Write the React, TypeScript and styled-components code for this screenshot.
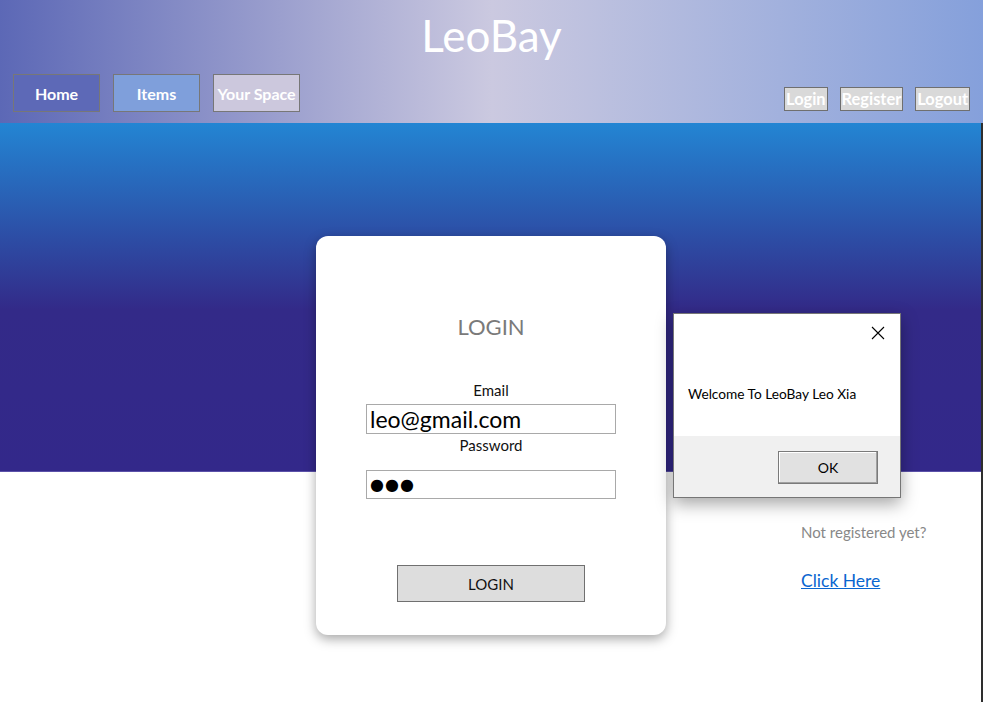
import React from "react";
import styled, { createGlobalStyle } from "styled-components";

const GlobalStyle = createGlobalStyle`
  html, body { margin: 0; padding: 0; background: #ffffff; }
  body { font-family: "Lato", "Noto Sans", "DejaVu Sans", sans-serif; }
  * { box-sizing: border-box; }
`;

const Page = styled.div`
  position: relative;
  width: 983px;
  height: 702px;
  overflow: hidden;
  display: flex;
  flex-direction: column;
`;

const Header = styled.header`
  height: 123px;
  flex: none;
  display: flex;
  flex-direction: column;
  background: linear-gradient(90deg, #5c68b6 0%, #cbc9e0 50%, #85a0db 100%);
`;

const Title = styled.h1`
  margin: 0;
  padding-top: 9px;
  text-align: center;
  font-family: "Lato", "Noto Sans", sans-serif;
  font-weight: 400;
  font-size: 44px;
  line-height: normal;
  color: #ffffff;
`;

const NavRow = styled.nav`
  margin-top: auto;
  display: flex;
  justify-content: space-between;
  align-items: flex-end;
  padding: 0 13px 11px 13px;
`;

const NavGroup = styled.div`
  display: flex;
  gap: 13px;
`;

const NavButton = styled.button<{ $bg: string }>`
  width: 87px;
  height: 38px;
  padding: 0;
  border: 1px solid #777777;
  background: ${(p) => p.$bg};
  color: #ffffff;
  font-family: "Lato", "Noto Sans", sans-serif;
  font-weight: 700;
  font-size: 16px;
  white-space: nowrap;
  overflow: visible;
  cursor: pointer;
`;

const AuthGroup = styled.div`
  display: flex;
  gap: 12px;
  margin-bottom: 1px;
`;

const AuthButton = styled.button`
  height: 24px;
  padding: 0 1px;
  border: 1px solid #6f6f6f;
  background: #d9d9d9;
  color: #ffffff;
  font-family: "Lato", "Noto Sans", sans-serif;
  font-weight: 700;
  font-size: 16.4px;
  line-height: 1;
  cursor: pointer;
`;

const Main = styled.main`
  flex: 1;
  display: grid;
  grid-template-columns: 316px 350px 1fr;
  align-items: start;
  padding-top: 113px;
  border-right: 2px solid #2e2e2e;
  background: linear-gradient(
    180deg,
    #2385d3 0px,
    #332a88 187px,
    #33288a 348px,
    #5b51a9 348px,
    #5b51a9 349px,
    #ffffff 349px
  );
`;

const Card = styled.section`
  grid-column: 2;
  height: 399px;
  background: #ffffff;
  border-radius: 12px;
  box-shadow: 0 4px 12px rgba(0, 0, 0, 0.35);
  display: flex;
  flex-direction: column;
  align-items: center;
  padding-top: 76px;
`;

const CardTitle = styled.h2`
  margin: 0;
  height: 30px;
  line-height: 30px;
  font-weight: 400;
  font-size: 22px;
  color: #7a7a7a;
`;

const FieldLabel = styled.label<{ $top: number }>`
  display: block;
  margin-top: ${(p) => p.$top}px;
  height: 20px;
  line-height: 20px;
  font-size: 15px;
  color: #111111;
`;

const TextField = styled.input<{ $top: number; $h: number }>`
  display: block;
  margin-top: ${(p) => p.$top}px;
  width: 250px;
  height: ${(p) => p.$h}px;
  padding: 0 3px;
  border: 1px solid #a9a9a9;
  background: #ffffff;
  font-family: "Lato", "Noto Sans", sans-serif;
  font-size: 23px;
  color: #000000;
  outline: none;
`;

const DotsField = styled(TextField)`
  font-family: "DejaVu Sans", sans-serif;
  font-size: 16px;
  letter-spacing: 1px;
`;

const SubmitButton = styled.button`
  margin-top: 66px;
  width: 188px;
  height: 37px;
  border: 1px solid #707070;
  background: #dddddd;
  color: #111111;
  font-family: "Lato", "Noto Sans", sans-serif;
  font-size: 15px;
  cursor: pointer;
`;

const Aside = styled.aside`
  grid-column: 3;
  padding: 286px 0 0 135px;
  display: flex;
  flex-direction: column;
  align-items: flex-start;
`;

const Hint = styled.p`
  margin: 0;
  height: 20px;
  line-height: 20px;
  font-size: 15px;
  color: #888888;
`;

const RegisterLink = styled.a`
  margin-top: 27px;
  line-height: 24px;
  font-size: 17.5px;
  color: #0a66d0;
  text-decoration: underline;
  cursor: pointer;
`;

const Dialog = styled.div`
  position: absolute;
  left: 673px;
  top: 313px;
  width: 228px;
  height: 185px;
  border: 1px solid #767676;
  background: #ffffff;
  box-shadow: 0 6px 16px rgba(0, 0, 0, 0.35);
  display: flex;
  flex-direction: column;
`;

const DialogBody = styled.div`
  flex: 1;
  padding: 12px 15px 0 14px;
  display: flex;
  flex-direction: column;
`;

const CloseButton = styled.button`
  align-self: flex-end;
  width: 14px;
  height: 14px;
  padding: 0;
  border: 0;
  background: transparent;
  display: flex;
  cursor: pointer;
`;

const Message = styled.p`
  margin: 46px 0 0;
  font-family: "Lato", sans-serif;
  font-size: 13.7px;
  line-height: 16px;
  color: #000000;
  white-space: nowrap;
`;

const DialogFooter = styled.div`
  height: 61px;
  flex: none;
  background: #f0f0f0;
  display: flex;
  justify-content: flex-end;
  align-items: flex-start;
  padding: 15px 22px 0 0;
`;

const OkButton = styled.button`
  width: 100px;
  height: 33px;
  border: 1px solid #7a7a7a;
  background: #e1e1e1;
  box-shadow: inset -1px -1px 0 #a0a0a0, inset 1px 1px 0 #ffffff;
  font-family: "Lato", sans-serif;
  font-size: 14px;
  color: #000000;
  cursor: pointer;
`;

export default function App() {
  return (
    <>
      <GlobalStyle />
      <Page>
        <Header>
          <Title>LeoBay</Title>
          <NavRow>
            <NavGroup>
              <NavButton $bg="#5d69b7">Home</NavButton>
              <NavButton $bg="#7f9fdb">Items</NavButton>
              <NavButton $bg="#ccc8dd">Your Space</NavButton>
            </NavGroup>
            <AuthGroup>
              <AuthButton>Login</AuthButton>
              <AuthButton>Register</AuthButton>
              <AuthButton>Logout</AuthButton>
            </AuthGroup>
          </NavRow>
        </Header>
        <Main>
          <Card>
            <CardTitle>LOGIN</CardTitle>
            <FieldLabel $top={38}>Email</FieldLabel>
            <TextField $top={4} $h={30} type="text" value="leo@gmail.com" readOnly />
            <FieldLabel $top={1}>Password</FieldLabel>
            <DotsField $top={15} $h={29} type="text" value="●●●" readOnly />
            <SubmitButton>LOGIN</SubmitButton>
          </Card>
          <Aside>
            <Hint>Not registered yet?</Hint>
            <RegisterLink>Click Here</RegisterLink>
          </Aside>
        </Main>
        <Dialog role="dialog">
          <DialogBody>
            <CloseButton aria-label="Close">
              <svg width="14" height="14" viewBox="0 0 14 14">
                <path d="M1 1 L13 13 M13 1 L1 13" stroke="#000" strokeWidth="1.1" fill="none" />
              </svg>
            </CloseButton>
            <Message>Welcome To LeoBay Leo Xia</Message>
          </DialogBody>
          <DialogFooter>
            <OkButton>OK</OkButton>
          </DialogFooter>
        </Dialog>
      </Page>
    </>
  );
}
